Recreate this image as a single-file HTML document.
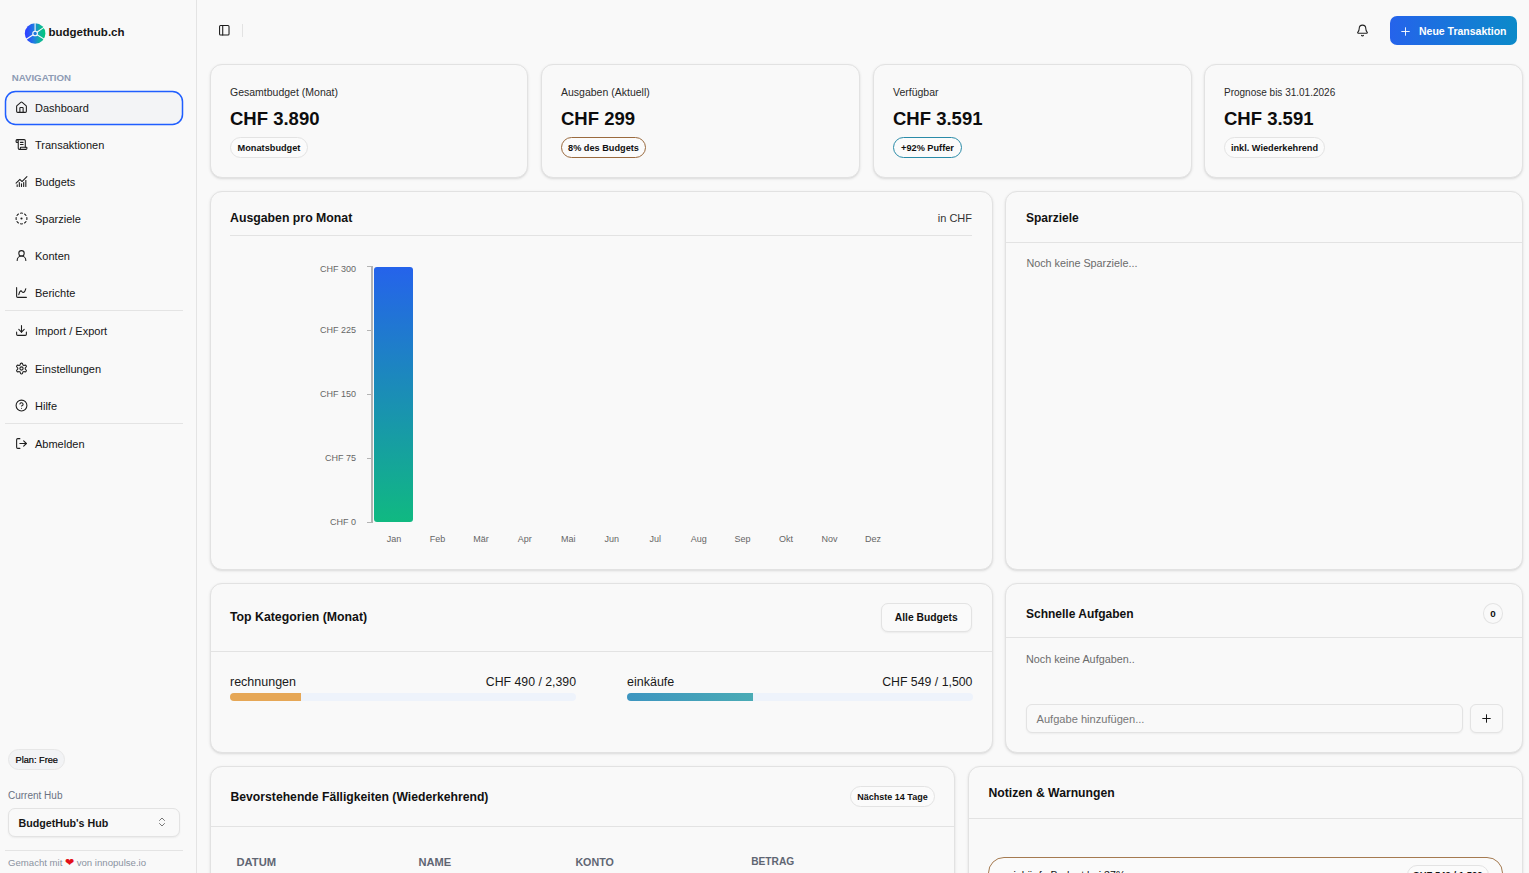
<!DOCTYPE html>
<html><head><meta charset="utf-8">
<style>
*{box-sizing:border-box;margin:0;padding:0}
html,body{width:1529px;height:873px;overflow:hidden;background:#f9f9f9;font-family:"Liberation Sans",sans-serif;color:#111}
.abs{position:absolute}
.t{position:absolute;white-space:nowrap;line-height:1}
.card{position:absolute;background:#f9f9f9;border:1px solid #e2e2e2;border-radius:12px;box-shadow:0 1px 3px 0 rgba(0,0,0,.1),0 1px 2px -1px rgba(0,0,0,.1)}
.hl{position:absolute;height:1px;background:#e3e3e3}
</style></head>
<body>
<div class="abs" style="left:196.00px;top:0.00px;width:1.00px;height:873.00px;background:#e4e4e4"></div>
<svg class="abs" style="left:24px;top:22px" width="23" height="23" viewBox="0 0 23 23">
<defs><linearGradient id="lg" x1="0" y1="0" x2="1" y2="0"><stop offset="0.1" stop-color="#2f44ff"/><stop offset="0.45" stop-color="#1e7ee0"/><stop offset="0.75" stop-color="#0fb59a"/><stop offset="1" stop-color="#00c77a"/></linearGradient></defs>
<circle cx="11.1" cy="11.5" r="10.3" fill="url(#lg)"/>
<g stroke="#f9f9f9" stroke-width="1.1"><line x1="11.1" y1="11.5" x2="11.10" y2="-0.50"/><line x1="11.1" y1="11.5" x2="20.93" y2="4.62"/><line x1="11.1" y1="11.5" x2="21.28" y2="17.86"/><line x1="11.1" y1="11.5" x2="1.04" y2="18.04"/></g>
<circle cx="11.1" cy="11.5" r="2.3" fill="#1f78dc" stroke="#f9f9f9" stroke-width="1.1"/>
</svg>
<div class="t" style="left:48.50px;top:27.07px;font-size:11.5px;font-weight:700;color:#161616;">budgethub.ch</div>
<div class="t" style="left:11.70px;top:72.89px;font-size:9.7px;font-weight:700;color:#8d9bb4;">NAVIGATION</div>
<svg class="abs" style="left:4px;top:90px" width="180" height="36"><rect x="1.5" y="1.5" width="177" height="33" rx="10" fill="#f3f4f6" stroke="#1f5eff" stroke-width="1.5"/></svg>
<svg class="abs" style="left:15.00px;top:101.00px" width="13" height="13" viewBox="0 0 24 24" fill="none" stroke="#1f1f1f" stroke-width="2" stroke-linecap="round" stroke-linejoin="round"><path d="M15 21v-8a1 1 0 0 0-1-1h-4a1 1 0 0 0-1 1v8"/><path d="M3 10a2 2 0 0 1 .709-1.528l7-5.999a2 2 0 0 1 2.582 0l7 5.999A2 2 0 0 1 21 10v9a2 2 0 0 1-2 2H5a2 2 0 0 1-2-2z"/></svg>
<div class="t" style="left:35.00px;top:102.69px;font-size:11px;font-weight:400;color:#161616;">Dashboard</div>
<svg class="abs" style="left:15.00px;top:138.20px" width="13" height="13" viewBox="0 0 24 24" fill="none" stroke="#1f1f1f" stroke-width="2" stroke-linecap="round" stroke-linejoin="round"><path d="M15 12h-5"/><path d="M15 8h-5"/><path d="M19 17V5a2 2 0 0 0-2-2H4"/><path d="M8 21h12a2 2 0 0 0 2-2v-1a1 1 0 0 0-1-1H11a1 1 0 0 0-1 1v1a2 2 0 1 1-4 0V5a2 2 0 1 0-4 0v2a1 1 0 0 0 1 1h3"/></svg>
<div class="t" style="left:35.00px;top:139.89px;font-size:11px;font-weight:400;color:#161616;">Transaktionen</div>
<svg class="abs" style="left:15.00px;top:175.20px" width="13" height="13" viewBox="0 0 24 24" fill="none" stroke="#1f1f1f" stroke-width="2" stroke-linecap="round" stroke-linejoin="round"><path d="M12 16v5"/><path d="M16 14v7"/><path d="M20 10v11"/><path d="m22 3-8.646 8.646a.5.5 0 0 1-.708 0L9.354 8.354a.5.5 0 0 0-.707 0L2 15"/><path d="M4 18v3"/><path d="M8 14v7"/></svg>
<div class="t" style="left:35.00px;top:176.89px;font-size:11px;font-weight:400;color:#161616;">Budgets</div>
<svg class="abs" style="left:15.00px;top:212.00px" width="13" height="13" viewBox="0 0 24 24" fill="none" stroke="#1f1f1f" stroke-width="2" stroke-linecap="round" stroke-linejoin="round"><path d="M10.1 2.18a9.93 9.93 0 0 1 3.8 0"/><path d="M17.6 3.71a9.95 9.95 0 0 1 2.69 2.7"/><path d="M21.82 10.1a9.93 9.93 0 0 1 0 3.8"/><path d="M20.29 17.6a9.95 9.95 0 0 1-2.7 2.69"/><path d="M13.9 21.82a9.94 9.94 0 0 1-3.8 0"/><path d="M6.4 20.29a9.95 9.95 0 0 1-2.69-2.7"/><path d="M2.18 13.9a9.93 9.93 0 0 1 0-3.8"/><path d="M3.71 6.4a9.95 9.95 0 0 1 2.7-2.69"/><circle cx="12" cy="12" r="1"/></svg>
<div class="t" style="left:35.00px;top:213.69px;font-size:11px;font-weight:400;color:#161616;">Sparziele</div>
<svg class="abs" style="left:15.00px;top:249.00px" width="13" height="13" viewBox="0 0 24 24" fill="none" stroke="#1f1f1f" stroke-width="2" stroke-linecap="round" stroke-linejoin="round"><circle cx="12" cy="8" r="5"/><path d="M20 21a8 8 0 0 0-16 0"/></svg>
<div class="t" style="left:35.00px;top:250.69px;font-size:11px;font-weight:400;color:#161616;">Konten</div>
<svg class="abs" style="left:15.00px;top:286.00px" width="13" height="13" viewBox="0 0 24 24" fill="none" stroke="#1f1f1f" stroke-width="2" stroke-linecap="round" stroke-linejoin="round"><path d="M3 3v16a2 2 0 0 0 2 2h16"/><path d="M7 16c.5-2 1.5-7 4-7 2 0 2 3 4 3 2.5 0 4.5-5 5-7"/></svg>
<div class="t" style="left:35.00px;top:287.69px;font-size:11px;font-weight:400;color:#161616;">Berichte</div>
<svg class="abs" style="left:15.00px;top:324.30px" width="13" height="13" viewBox="0 0 24 24" fill="none" stroke="#1f1f1f" stroke-width="2" stroke-linecap="round" stroke-linejoin="round"><path d="M21 15v4a2 2 0 0 1-2 2H5a2 2 0 0 1-2-2v-4"/><polyline points="7 10 12 15 17 10"/><line x1="12" x2="12" y1="15" y2="3"/></svg>
<div class="t" style="left:35.00px;top:325.99px;font-size:11px;font-weight:400;color:#161616;">Import / Export</div>
<svg class="abs" style="left:15.00px;top:362.00px" width="13" height="13" viewBox="0 0 24 24" fill="none" stroke="#1f1f1f" stroke-width="2" stroke-linecap="round" stroke-linejoin="round"><path d="M12.22 2h-.44a2 2 0 0 0-2 2v.18a2 2 0 0 1-1 1.73l-.43.25a2 2 0 0 1-2 0l-.15-.08a2 2 0 0 0-2.73.73l-.22.38a2 2 0 0 0 .73 2.73l.15.1a2 2 0 0 1 1 1.72v.51a2 2 0 0 1-1 1.74l-.15.09a2 2 0 0 0-.73 2.730l.22.38a2 2 0 0 0 2.73.73l.15-.08a2 2 0 0 1 2 0l.43.25a2 2 0 0 1 1 1.73V20a2 2 0 0 0 2 2h.44a2 2 0 0 0 2-2v-.18a2 2 0 0 1 1-1.73l.43-.25a2 2 0 0 1 2 0l.15.08a2 2 0 0 0 2.73-.73l.22-.39a2 2 0 0 0-.73-2.73l-.15-.08a2 2 0 0 1-1-1.74v-.5a2 2 0 0 1 1-1.74l.15-.09a2 2 0 0 0 .73-2.73l-.22-.38a2 2 0 0 0-2.73-.73l-.15.08a2 2 0 0 1-2 0l-.43-.25a2 2 0 0 1-1-1.73V4a2 2 0 0 0-2-2z"/><circle cx="12" cy="12" r="3"/></svg>
<div class="t" style="left:35.00px;top:363.69px;font-size:11px;font-weight:400;color:#161616;">Einstellungen</div>
<svg class="abs" style="left:15.00px;top:399.00px" width="13" height="13" viewBox="0 0 24 24" fill="none" stroke="#1f1f1f" stroke-width="2" stroke-linecap="round" stroke-linejoin="round"><circle cx="12" cy="12" r="10"/><path d="M9.09 9a3 3 0 0 1 5.83 1c0 2-3 3-3 3"/><path d="M12 17h.01"/></svg>
<div class="t" style="left:35.00px;top:400.69px;font-size:11px;font-weight:400;color:#161616;">Hilfe</div>
<svg class="abs" style="left:15.00px;top:437.00px" width="13" height="13" viewBox="0 0 24 24" fill="none" stroke="#1f1f1f" stroke-width="2" stroke-linecap="round" stroke-linejoin="round"><path d="M9 21H5a2 2 0 0 1-2-2V5a2 2 0 0 1 2-2h4"/><polyline points="16 17 21 12 16 7"/><line x1="21" x2="9" y1="12" y2="12"/></svg>
<div class="t" style="left:35.00px;top:438.69px;font-size:11px;font-weight:400;color:#161616;">Abmelden</div>
<div class="abs" style="left:5.00px;top:310.00px;width:178.00px;height:1.00px;background:#e4e4e4"></div>
<div class="abs" style="left:5.00px;top:423.00px;width:178.00px;height:1.00px;background:#e4e4e4"></div>
<div class="abs" style="left:8.00px;top:749.00px;width:57.00px;height:21.00px;border:1px solid #e7e7e7;border-radius:11px;background:#f2f3f5"></div>
<div class="t" style="left:15.60px;top:755.71px;font-size:9.2px;font-weight:400;color:#000;-webkit-text-stroke:0.2px #000">Plan: Free</div>
<div class="t" style="left:8.00px;top:791.03px;font-size:10px;font-weight:400;color:#6a7282;">Current Hub</div>
<div class="abs" style="left:8.00px;top:808.00px;width:172.00px;height:29.00px;border:1px solid #e3e3e3;border-radius:7px;background:#f9f9f9;box-shadow:0 1px 2px rgba(0,0,0,.06)"></div>
<div class="t" style="left:18.50px;top:818.24px;font-size:10.7px;font-weight:700;color:#161616;">BudgetHub's Hub</div>
<svg class="abs" style="left:156.00px;top:816.00px" width="12" height="12" viewBox="0 0 24 24" fill="none" stroke="#555" stroke-width="1.6" stroke-linecap="round" stroke-linejoin="round"><path d="m7 15 5 5 5-5"/><path d="m7 9 5-5 5 5"/></svg>
<div class="abs" style="left:5.00px;top:850.00px;width:178.00px;height:1.00px;background:#e4e4e4"></div>
<div class="t" style="left:8.00px;top:858.47px;font-size:9.6px;font-weight:400;color:#8b93a1;">Gemacht mit <span style="color:#e3101a;font-size:11px;line-height:0">&#10084;</span> von innopulse.io</div>
<svg class="abs" style="left:218.20px;top:24.00px" width="12.6" height="12.6" viewBox="0 0 24 24" fill="none" stroke="#1a1a1a" stroke-width="2" stroke-linecap="round" stroke-linejoin="round"><rect width="18" height="18" x="3" y="3" rx="2"/><path d="M9 3v18"/></svg>
<div class="abs" style="left:242.00px;top:24.00px;width:1.00px;height:13.00px;background:#e3e3e3"></div>
<svg class="abs" style="left:1355.50px;top:23.50px" width="13" height="13" viewBox="0 0 24 24" fill="none" stroke="#222" stroke-width="2" stroke-linecap="round" stroke-linejoin="round"><path d="M10.268 21a2 2 0 0 0 3.464 0"/><path d="M3.262 15.326A1 1 0 0 0 4 17h16a1 1 0 0 0 .74-1.673C19.41 13.956 18 12.499 18 8A6 6 0 0 0 6 8c0 4.499-1.411 5.956-2.738 7.326"/></svg>
<div class="abs" style="left:1390.00px;top:16.00px;width:127.00px;height:29.00px;border-radius:7px;background:linear-gradient(90deg,#2563eb,#0b8ac9)"></div>
<svg class="abs" style="left:1399.00px;top:24.50px" width="13" height="13" viewBox="0 0 24 24" fill="none" stroke="#fff" stroke-width="1.7" stroke-linecap="round" stroke-linejoin="round"><path d="M5 12h14"/><path d="M12 5v14"/></svg>
<div class="t" style="left:1419.00px;top:25.71px;font-size:10.5px;font-weight:700;color:#fff;">Neue Transaktion</div>
<div class="card" style="left:210px;top:64px;width:318px;height:114px"></div>
<div class="t" style="left:230.00px;top:87.01px;font-size:10.5px;font-weight:400;color:#2a2a2a;">Gesamtbudget (Monat)</div>
<div class="t" style="left:230.00px;top:109.94px;font-size:18.5px;font-weight:700;color:#0d0d0d;">CHF 3.890</div>
<div class="abs" style="left:230px;top:137px;width:78px;height:21px;border:1px solid #e3e3e3;border-radius:11px;background:#fbfbfb;font-size:9.2px;font-weight:700;line-height:20px;text-align:center;white-space:nowrap;color:#111">Monatsbudget</div>
<div class="card" style="left:541px;top:64px;width:319px;height:114px"></div>
<div class="t" style="left:561.00px;top:87.01px;font-size:10.5px;font-weight:400;color:#2a2a2a;">Ausgaben (Aktuell)</div>
<div class="t" style="left:561.00px;top:109.94px;font-size:18.5px;font-weight:700;color:#0d0d0d;">CHF 299</div>
<div class="abs" style="left:561px;top:137px;width:85px;height:21px;border:1px solid #9a6a3e;border-radius:11px;background:#fbfbfb;font-size:9.2px;font-weight:700;line-height:20px;text-align:center;white-space:nowrap;color:#111">8% des Budgets</div>
<div class="card" style="left:873px;top:64px;width:319px;height:114px"></div>
<div class="t" style="left:893.00px;top:87.01px;font-size:10.5px;font-weight:400;color:#2a2a2a;">Verfügbar</div>
<div class="t" style="left:893.00px;top:109.94px;font-size:18.5px;font-weight:700;color:#0d0d0d;">CHF 3.591</div>
<div class="abs" style="left:893px;top:137px;width:69px;height:21px;border:1px solid #2a8ba8;border-radius:11px;background:#fbfbfb;font-size:9.2px;font-weight:700;line-height:20px;text-align:center;white-space:nowrap;color:#111">+92% Puffer</div>
<div class="card" style="left:1204px;top:64px;width:319px;height:114px"></div>
<div class="t" style="left:1224.00px;top:87.83px;font-size:10.0px;font-weight:400;color:#2a2a2a;">Prognose bis 31.01.2026</div>
<div class="t" style="left:1224.00px;top:109.94px;font-size:18.5px;font-weight:700;color:#0d0d0d;">CHF 3.591</div>
<div class="abs" style="left:1224px;top:137px;width:101px;height:21px;border:1px solid #e3e3e3;border-radius:11px;background:#fbfbfb;font-size:9.2px;font-weight:700;line-height:20px;text-align:center;white-space:nowrap;color:#111">inkl. Wiederkehrend</div>
<div class="card" style="left:210px;top:191px;width:783px;height:379px"></div>
<div class="t" style="left:230.00px;top:211.99px;font-size:12.3px;font-weight:700;color:#111;">Ausgaben pro Monat</div>
<div class="t" style="right:557.00px;top:213.09px;font-size:11px;font-weight:400;color:#333;">in CHF</div>
<div class="abs" style="left:230.00px;top:235.00px;width:742.00px;height:1.00px;background:#e3e3e3"></div>
<div class="t" style="right:1173.00px;top:265.18px;font-size:9px;font-weight:400;color:#666;">CHF 300</div>
<div class="abs" style="left:367.00px;top:265.50px;width:5.00px;height:1.20px;background:#b4b4b4"></div>
<div class="t" style="right:1173.00px;top:325.58px;font-size:9px;font-weight:400;color:#666;">CHF 225</div>
<div class="abs" style="left:367.00px;top:329.50px;width:5.00px;height:1.20px;background:#b4b4b4"></div>
<div class="t" style="right:1173.00px;top:389.58px;font-size:9px;font-weight:400;color:#666;">CHF 150</div>
<div class="abs" style="left:367.00px;top:393.50px;width:5.00px;height:1.20px;background:#b4b4b4"></div>
<div class="t" style="right:1173.00px;top:453.58px;font-size:9px;font-weight:400;color:#666;">CHF 75</div>
<div class="abs" style="left:367.00px;top:457.50px;width:5.00px;height:1.20px;background:#b4b4b4"></div>
<div class="t" style="right:1173.00px;top:517.58px;font-size:9px;font-weight:400;color:#666;">CHF 0</div>
<div class="abs" style="left:367.00px;top:521.50px;width:5.00px;height:1.20px;background:#b4b4b4"></div>
<div class="abs" style="left:371.00px;top:266.00px;width:1.50px;height:256.50px;background:#b4b4b4"></div>
<div class="abs" style="left:374.00px;top:267.00px;width:39.00px;height:255.00px;border-radius:3px;background:linear-gradient(180deg,#2563eb,#10b981)"></div>
<div class="t" style="left:294.00px;width:200px;text-align:center;top:534.88px;font-size:9px;font-weight:400;color:#666;">Jan</div>
<div class="t" style="left:337.55px;width:200px;text-align:center;top:534.88px;font-size:9px;font-weight:400;color:#666;">Feb</div>
<div class="t" style="left:381.10px;width:200px;text-align:center;top:534.88px;font-size:9px;font-weight:400;color:#666;">Mär</div>
<div class="t" style="left:424.65px;width:200px;text-align:center;top:534.88px;font-size:9px;font-weight:400;color:#666;">Apr</div>
<div class="t" style="left:468.20px;width:200px;text-align:center;top:534.88px;font-size:9px;font-weight:400;color:#666;">Mai</div>
<div class="t" style="left:511.75px;width:200px;text-align:center;top:534.88px;font-size:9px;font-weight:400;color:#666;">Jun</div>
<div class="t" style="left:555.30px;width:200px;text-align:center;top:534.88px;font-size:9px;font-weight:400;color:#666;">Jul</div>
<div class="t" style="left:598.85px;width:200px;text-align:center;top:534.88px;font-size:9px;font-weight:400;color:#666;">Aug</div>
<div class="t" style="left:642.40px;width:200px;text-align:center;top:534.88px;font-size:9px;font-weight:400;color:#666;">Sep</div>
<div class="t" style="left:685.95px;width:200px;text-align:center;top:534.88px;font-size:9px;font-weight:400;color:#666;">Okt</div>
<div class="t" style="left:729.50px;width:200px;text-align:center;top:534.88px;font-size:9px;font-weight:400;color:#666;">Nov</div>
<div class="t" style="left:773.05px;width:200px;text-align:center;top:534.88px;font-size:9px;font-weight:400;color:#666;">Dez</div>
<div class="card" style="left:1005px;top:191px;width:518px;height:379px"></div>
<div class="t" style="left:1026.00px;top:211.64px;font-size:12px;font-weight:700;color:#111;">Sparziele</div>
<div class="abs" style="left:1006.00px;top:242.00px;width:516.00px;height:1.00px;background:#e3e3e3"></div>
<div class="t" style="left:1026.40px;top:257.66px;font-size:10.8px;font-weight:400;color:#6b6b6b;">Noch keine Sparziele...</div>
<div class="card" style="left:210px;top:583px;width:783px;height:170px"></div>
<div class="t" style="left:230.00px;top:611.49px;font-size:12.3px;font-weight:700;color:#111;">Top Kategorien (Monat)</div>
<div class="abs" style="left:881.00px;top:603.00px;width:90.50px;height:28.50px;border:1px solid #e3e3e3;border-radius:7px;background:#fafafa;box-shadow:0 1px 2px rgba(0,0,0,.06)"></div>
<div class="t" style="left:826.20px;width:200px;text-align:center;top:613.08px;font-size:10.3px;font-weight:700;color:#111;">Alle Budgets</div>
<div class="abs" style="left:211.00px;top:651.00px;width:781.00px;height:1.00px;background:#e3e3e3"></div>
<div class="t" style="left:230.00px;top:676.02px;font-size:12.5px;font-weight:400;color:#1a1a1a;">rechnungen</div>
<div class="t" style="right:953.00px;top:676.19px;font-size:12.3px;font-weight:400;color:#1a1a1a;">CHF 490 / 2,390</div>
<div class="abs" style="left:230.00px;top:693.00px;width:346.00px;height:8.00px;border-radius:4px;background:#eef3fb"></div>
<div class="abs" style="left:230.00px;top:693.00px;width:71.00px;height:8.00px;border-radius:4px 0 0 4px;background:#e6a756"></div>
<div class="t" style="left:627.00px;top:676.02px;font-size:12.5px;font-weight:400;color:#1a1a1a;">einkäufe</div>
<div class="t" style="right:556.60px;top:676.19px;font-size:12.3px;font-weight:400;color:#1a1a1a;">CHF 549 / 1,500</div>
<div class="abs" style="left:627.00px;top:693.00px;width:345.50px;height:8.00px;border-radius:4px;background:#eef3fb"></div>
<div class="abs" style="left:627.00px;top:693.00px;width:126.00px;height:8.00px;border-radius:4px 0 0 4px;background:linear-gradient(90deg,#3d95c0,#4aabb5)"></div>
<div class="card" style="left:1005px;top:583px;width:518px;height:170px"></div>
<div class="t" style="left:1026.00px;top:607.64px;font-size:12px;font-weight:700;color:#111;">Schnelle Aufgaben</div>
<div class="abs" style="left:1483.00px;top:603.00px;width:20.00px;height:20.50px;border:1px solid #e3e3e3;border-radius:50%"></div>
<div class="t" style="left:1393.00px;width:200px;text-align:center;top:608.70px;font-size:9.8px;font-weight:700;color:#111;">0</div>
<div class="abs" style="left:1006.00px;top:637.00px;width:516.00px;height:1.00px;background:#e3e3e3"></div>
<div class="t" style="left:1026.00px;top:654.26px;font-size:10.8px;font-weight:400;color:#6b6b6b;">Noch keine Aufgaben..</div>
<div class="abs" style="left:1026.00px;top:704.00px;width:436.50px;height:28.50px;border:1px solid #e3e3e3;border-radius:6px;background:#f9f9f9;box-shadow:0 1px 2px rgba(0,0,0,.05)"></div>
<div class="t" style="left:1036.50px;top:713.60px;font-size:11.1px;font-weight:400;color:#777;">Aufgabe hinzufügen...</div>
<div class="abs" style="left:1469.50px;top:704.00px;width:33.00px;height:28.50px;border:1px solid #e3e3e3;border-radius:6px;background:#f9f9f9;box-shadow:0 1px 2px rgba(0,0,0,.05)"></div>
<svg class="abs" style="left:1479.50px;top:711.50px" width="13" height="13" viewBox="0 0 24 24" fill="none" stroke="#111" stroke-width="1.8" stroke-linecap="round" stroke-linejoin="round"><path d="M5 12h14"/><path d="M12 5v14"/></svg>
<div class="card" style="left:210px;top:766px;width:745px;height:200px"></div>
<div class="t" style="left:230.50px;top:790.57px;font-size:12.2px;font-weight:700;color:#111;">Bevorstehende Fälligkeiten (Wiederkehrend)</div>
<div class="abs" style="left:850.00px;top:786.00px;width:85.00px;height:21.00px;border:1px solid #e3e3e3;border-radius:11px;background:#fbfbfb"></div>
<div class="t" style="left:792.50px;width:200px;text-align:center;top:792.88px;font-size:9px;font-weight:700;color:#111;">Nächste 14 Tage</div>
<div class="abs" style="left:211.00px;top:826.00px;width:743.00px;height:1.00px;background:#e3e3e3"></div>
<div class="t" style="left:236.50px;top:856.52px;font-size:11.2px;font-weight:700;color:#5f6673;">DATUM</div>
<div class="t" style="left:418.40px;top:856.60px;font-size:11.1px;font-weight:700;color:#5f6673;">NAME</div>
<div class="t" style="left:575.40px;top:856.94px;font-size:10.7px;font-weight:700;color:#5f6673;">KONTO</div>
<div class="t" style="left:751.20px;top:857.37px;font-size:10.2px;font-weight:700;color:#5f6673;">BETRAG</div>
<div class="card" style="left:968px;top:766px;width:555px;height:200px"></div>
<div class="t" style="left:988.50px;top:786.57px;font-size:12.2px;font-weight:700;color:#111;">Notizen &amp; Warnungen</div>
<div class="abs" style="left:969.00px;top:818.00px;width:553.00px;height:1.00px;background:#e3e3e3"></div>
<div class="abs" style="left:988.00px;top:857.00px;width:514.50px;height:60.00px;border:1px solid #a57a50;border-radius:16px;background:#fafafa"></div>
<div class="t" style="left:1007.50px;top:870.03px;font-size:10.6px;font-weight:400;color:#111;">einkäufe Budget bei 37%</div>
<div class="abs" style="left:1406.50px;top:864.50px;width:82.50px;height:20.00px;border:1px solid #e3e3e3;border-radius:10px;background:#fbfbfb"></div>
<div class="t" style="left:1347.70px;width:200px;text-align:center;top:869.96px;font-size:9.5px;font-weight:700;color:#111;">CHF 549 / 1,500</div>
</body></html>
